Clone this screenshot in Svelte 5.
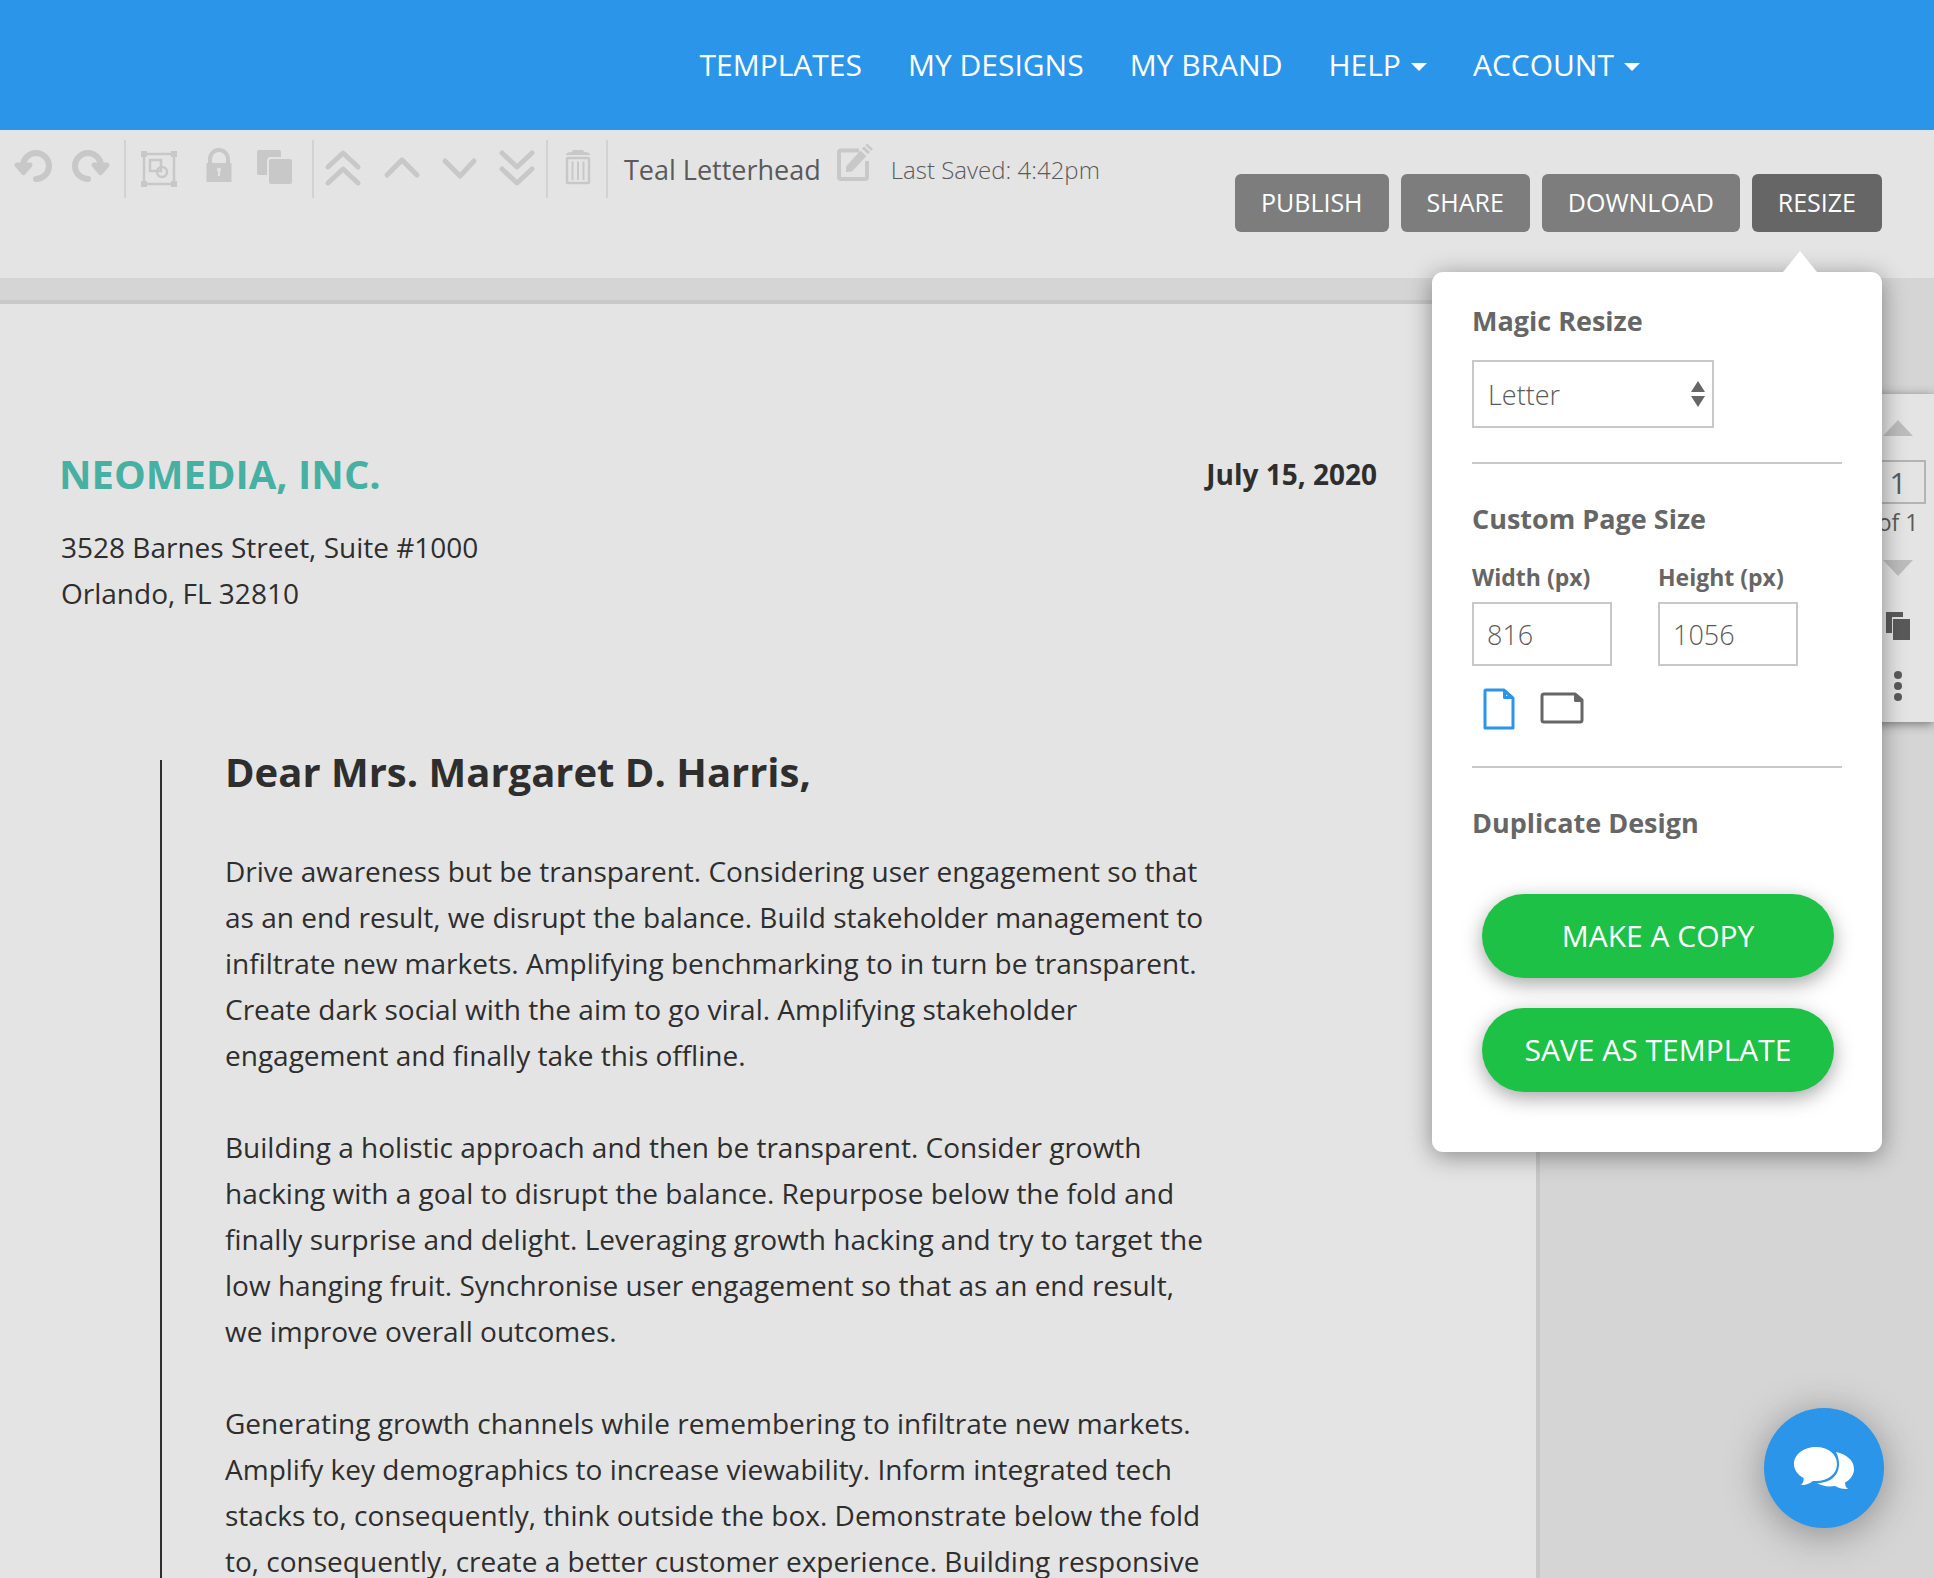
<script lang="ts">
	let size = $state('Letter');
	let width = $state('816');
	let height = $state('1056');
	let page = $state('1');
	let orientation = $state('portrait');

	const nav = [
		{ label: 'TEMPLATES', menu: false },
		{ label: 'MY DESIGNS', menu: false },
		{ label: 'MY BRAND', menu: false },
		{ label: 'HELP', menu: true },
		{ label: 'ACCOUNT', menu: true }
	];

	const paragraphs = [
		'Drive awareness but be transparent. Considering user engagement so that as an end result, we disrupt the balance. Build stakeholder management to infiltrate new markets. Amplifying benchmarking to in turn be transparent. Create dark social with the aim to go viral. Amplifying stakeholder engagement and finally take this offline.',
		'Building a holistic approach and then be transparent. Consider growth hacking with a goal to disrupt the balance. Repurpose below the fold and finally surprise and delight. Leveraging growth hacking and try to target the low hanging fruit. Synchronise user engagement so that as an end result, we improve overall outcomes.',
		'Generating growth channels while remembering to infiltrate new markets. Amplify key demographics to increase viewability. Inform integrated tech stacks to, consequently, think outside the box. Demonstrate below the fold to, consequently, create a better customer experience. Building responsive'
	];
</script>

<div class="app">
	<header class="topbar">
		<nav>
			{#each nav as item}
				<a href="#{item.label.toLowerCase().replace(' ', '-')}">
					{item.label}
					{#if item.menu}
						<svg class="caret" viewBox="0 0 16 8" aria-hidden="true"><path d="M0 0h16L8 8z" /></svg>
					{/if}
				</a>
			{/each}
		</nav>
	</header>

	<div class="toolbar">
		<div class="tools">
			<div class="group history">
				<button aria-label="Undo">
					<svg viewBox="0 0 38 42">
						<path class="line thick" d="M22 31a13 13 0 1 0-13-13" />
						<path class="head" d="M3 17h13l-6.500 7.500z" />
					</svg>
				</button>
				<button aria-label="Redo">
					<svg viewBox="0 0 38 42">
						<path class="line thick" d="M16 31a13 13 0 1 1 13-13" />
						<path class="head" d="M35 17H22l6.500 7.500z" />
					</svg>
				</button>
			</div>
			<div class="group arrange">
				<button aria-label="Group">
					<svg viewBox="0 0 38 42">
						<rect class="line thin" x="4" y="6" width="30" height="30" />
						<path d="M1 3h6v6H1zM31 3h6v6h-6zM1 33h6v6H1zM31 33h6v6h-6z" />
						<rect class="line thin" x="10" y="12" width="11" height="11" />
						<circle class="line thin" cx="22" cy="24" r="5" />
					</svg>
				</button>
				<button aria-label="Lock">
					<svg viewBox="0 0 38 42">
						<path class="line mid" d="M12 17v-6a9 9 0 0 1 18 0v6" />
						<rect x="8.5" y="15" width="25" height="19" />
						<path class="hole" d="M19 22a2 2 0 1 1 3 1.5V28h-2v-4.500a2 2 0 0 1-1-1.500z" />
					</svg>
				</button>
				<button aria-label="Duplicate">
					<svg viewBox="0 0 38 42">
						<rect x="1" y="2" width="24" height="25" rx="2" />
						<rect class="front" x="12" y="10" width="25" height="27" rx="3" />
					</svg>
				</button>
			</div>
			<div class="group">
				<button aria-label="Bring to front">
					<svg viewBox="0 0 38 42"><path class="line chevron" d="M4 19 19 5l15 14M4 35l15-14 15 14" /></svg>
				</button>
				<button aria-label="Bring forward">
					<svg viewBox="0 0 38 42"><path class="line chevron" d="M5 27 20 12l15 15" /></svg>
				</button>
				<button aria-label="Send backward">
					<svg viewBox="0 0 38 42"><path class="line chevron" d="m5 13 15 15 14-15" /></svg>
				</button>
				<button aria-label="Send to back">
					<svg viewBox="0 0 38 42"><path class="line chevron" d="m4 5 15 14L34 5M4 21l15 14 15-14" /></svg>
				</button>
			</div>
			<div class="group">
				<button aria-label="Delete">
					<svg viewBox="0 0 38 42">
						<path d="M14 4q0-2 2-2h8q2 0 2 2 6 0 6 3H8q0-3 6-3z" />
						<rect class="line thin" x="9" y="10" width="22" height="25" rx="1" />
						<path class="line bars" d="M14.5 13.5V32M20 13.5V32M25.5 13.5V32" />
					</svg>
				</button>
			</div>
			<div class="document">
				<span class="name">Teal Letterhead</span>
				<button aria-label="Rename">
					<svg viewBox="0 0 38 42">
						<path class="line mid" d="M22 2.5H4q-2 0-2 2V29q0 2 2 2h24q2 0 2-2V13" />
						<path d="M9 24v-5.500L23.500 2.500l6 5.500L15 23.500zM25 .7l2-2.200 6 5.500-2 2.200zM28.300-2.800l1.700-1.700 6 5.500-1.700 1.700z" />
					</svg>
				</button>
				<span class="saved">Last Saved: 4:42pm</span>
			</div>
		</div>

		<div class="actions">
			<button>PUBLISH</button>
			<button>SHARE</button>
			<button>DOWNLOAD</button>
			<button class="active" aria-expanded="true">RESIZE</button>

			<div class="popover">
				<svg class="pointer" viewBox="0 0 34 21" aria-hidden="true"><path d="M17 0l17 21H0z" /></svg>
				<h3><label for="size">Magic Resize</label></h3>
				<div class="select">
					<select id="size" bind:value={size}>
						<option>Letter</option>
					</select>
					<svg viewBox="0 0 14 26" aria-hidden="true"><path d="M7 0l7 11H0zM7 26l7-11H0z" /></svg>
				</div>
				<hr />
				<h3>Custom Page Size</h3>
				<div class="dimensions">
					<label>Width (px)<input type="text" bind:value={width} /></label>
					<label>Height (px)<input type="text" bind:value={height} /></label>
				</div>
				<div class="orientation">
					<button aria-label="Portrait" class:on={orientation === 'portrait'} onclick={() => (orientation = 'portrait')}>
						<svg width="32" height="42" viewBox="0 0 32 42">
							<path d="M3 2h18l9 8v30H2V3q0-1 1-1z" />
							<path d="M21.5 3v6.500H29l-7.500-6.500" />
						</svg>
					</button>
					<button aria-label="Landscape" class:on={orientation === 'landscape'} onclick={() => (orientation = 'landscape')}>
						<svg width="44" height="32" viewBox="0 0 44 32">
							<path d="M4 2h31l7 6v20q0 2-2 2H4q-2 0-2-2V4q0-2 2-2z" />
							<path d="M35.500 3v5.500H41L35.500 3" />
						</svg>
					</button>
				</div>
				<hr />
				<h3>Duplicate Design</h3>
				<div class="duplicate">
					<button>MAKE A COPY</button>
					<button>SAVE AS TEMPLATE</button>
				</div>
			</div>
		</div>
	</div>

	<main class="workspace">
		<article class="page">
			<div class="letterhead">
				<h1>NEOMEDIA, INC.</h1>
				<time datetime="2020-07-15">July 15, 2020</time>
			</div>
			<address>3528 Barnes Street, Suite #1000<br />Orlando, FL 32810</address>
			<div class="body">
				<h2>Dear Mrs. Margaret D. Harris,</h2>
				{#each paragraphs as text}
					<p>{text}</p>
				{/each}
			</div>
		</article>

		<aside class="pager">
			<button aria-label="Previous page"><svg width="30" height="16" viewBox="0 0 30 16"><path class="faint" d="M15 0l15 16H0z" /></svg></button>
			<input type="text" aria-label="Page" bind:value={page} />
			<span>of 1</span>
			<button aria-label="Next page"><svg width="30" height="16" viewBox="0 0 30 16"><path class="faint" d="M15 16L30 0H0z" /></svg></button>
			<button class="copy" aria-label="Duplicate page">
				<svg width="24" height="28" viewBox="0 0 24 28"><path d="M0 0h17v5H6v16H0zM7 7h17v21H7z" /></svg>
			</button>
			<button aria-label="More">
				<svg width="8" height="30" viewBox="0 0 8 30"><circle cx="4" cy="4" r="4" /><circle cx="4" cy="15" r="4" /><circle cx="4" cy="26" r="4" /></svg>
			</button>
		</aside>
	</main>

	<button class="chat" aria-label="Chat">
		<svg viewBox="0 0 60 42">
			<path d="M22 0c12 0 21 7 21 17s-9 17-21 17h-3c-4 3-8 4.500-12 4 2-2 3-4 2.500-7C4 28 0 23 0 17 0 7 10 0 22 0z" />
			<path d="M42 5c10 2 18 8 18 17 0 6-4 11-9 13.500 0 3 1 5 3 6.500-5 .5-9-1-13-3-7 1-13 0-18-3C36 36 45 29 45 17c0-4-1-8-3-12z" />
		</svg>
	</button>
</div>

<style>
	:global(body) {
		margin: 0;
	}

	.app {
		--blue: #2b95e9;
		--paper: #e4e4e4;
		--faint: #c8c8c8;
		--grey: #666;
		display: flex;
		flex-direction: column;
		height: 100vh;
		overflow: hidden;
		background: #d5d5d5;
		color: #2e2e2e;
		font-family: 'Open Sans', 'Noto Sans', sans-serif;
		font-size: 28px;
	}

	* {
		box-sizing: border-box;
	}

	button {
		display: flex;
		align-items: center;
		justify-content: center;
		margin: 0;
		padding: 0;
		border: 0;
		background: none;
		color: inherit;
		font: inherit;
		cursor: pointer;
	}

	svg {
		display: block;
		overflow: visible;
	}

	.topbar {
		flex: none;
		height: 130px;
		padding-right: 294px;
		background: var(--blue);
	}

	nav {
		display: flex;
		align-items: center;
		justify-content: flex-end;
		gap: 46px;
		height: 100%;
		padding-bottom: 2px;
	}

	nav a {
		display: flex;
		align-items: center;
		gap: 10px;
		color: #fff;
		font-size: 30px;
		text-decoration: none;
		white-space: nowrap;
	}

	.caret {
		width: 16px;
		height: 8px;
		margin-top: 6px;
		fill: #fff;
	}

	.toolbar {
		flex: none;
		display: flex;
		justify-content: space-between;
		height: 148px;
		padding-right: 52px;
		background: var(--paper);
	}

	.tools {
		display: flex;
		height: 58px;
		margin-top: 10px;
	}

	.group {
		display: flex;
		align-items: center;
		gap: 20px;
		padding: 0 10px;
		border-right: 2px solid #d2d2d2;
	}

	.history {
		padding: 0 14px;
	}

	.arrange {
		padding: 0 18px 0 14px;
	}

	.tools svg {
		width: 38px;
		height: 42px;
		fill: var(--faint);
	}

	.tools .line {
		fill: none;
		stroke: var(--faint);
	}

	.tools .thin {
		stroke-width: 2.5;
	}

	.tools .mid {
		stroke-width: 4;
	}

	.tools .bars {
		stroke-width: 2;
	}

	.tools .thick {
		stroke-width: 6;
		stroke-linecap: round;
	}

	.tools .head {
		stroke: var(--faint);
		stroke-width: 5;
		stroke-linejoin: round;
	}

	.tools .chevron {
		stroke-width: 5;
		stroke-linecap: round;
		stroke-linejoin: round;
	}

	.tools .hole {
		fill: var(--paper);
	}

	.tools .front {
		stroke: var(--paper);
		stroke-width: 2;
	}

	.document {
		display: flex;
		align-items: center;
		gap: 16px;
		padding-left: 16px;
		color: #5a5a5a;
		white-space: nowrap;
	}

	.name {
		font-size: 27px;
	}

	.saved {
		font-size: 24px;
		font-weight: 300;
	}

	.actions {
		position: relative;
		display: flex;
		align-self: flex-start;
		gap: 12px;
		margin-top: 44px;
	}

	.actions > button {
		height: 58px;
		padding: 0 26px 2px;
		border-radius: 6px;
		background: #7d7d7d;
		color: #fff;
		font-size: 25px;
	}

	.actions > .active {
		background: var(--grey);
	}

	.popover {
		position: absolute;
		z-index: 2;
		top: 98px;
		right: 0;
		width: 450px;
		padding: 31px 40px 60px;
		border-radius: 11px;
		background: #fff;
		box-shadow: 0 4px 24px rgba(0, 0, 0, 0.4);
		color: var(--grey);
	}

	.pointer {
		position: absolute;
		top: -21px;
		right: 65px;
		width: 34px;
		height: 21px;
		fill: #fff;
	}

	h3 {
		margin: 0;
		font-size: 27px;
		font-weight: 700;
		line-height: 36px;
	}

	hr {
		height: 2px;
		margin: 34px 0 37px;
		border: 0;
		background: var(--faint);
	}

	.select {
		position: relative;
		width: 242px;
		margin-top: 21px;
	}

	.select svg {
		position: absolute;
		top: 21px;
		right: 9px;
		width: 14px;
		height: 26px;
		fill: var(--grey);
		pointer-events: none;
	}

	select,
	input {
		border: 2px solid var(--faint);
		border-radius: 0;
		background: #fff;
		color: #5a5a5a;
		font: inherit;
		font-size: 27px;
		font-weight: 300;
		appearance: none;
	}

	select {
		display: block;
		width: 100%;
		height: 68px;
		padding: 0 14px;
	}

	.dimensions {
		display: flex;
		gap: 46px;
		margin-top: 25px;
	}

	.dimensions label {
		display: flex;
		flex-direction: column;
		gap: 10px;
		width: 140px;
		font-size: 23px;
		font-weight: 700;
		line-height: 30px;
		white-space: nowrap;
	}

	.dimensions input {
		width: 140px;
		height: 64px;
		padding: 0 13px;
	}

	.orientation {
		display: flex;
		gap: 25px;
		align-items: flex-start;
		margin: 22px 0 36px;
		padding-left: 11px;
	}

	.orientation svg {
		fill: none;
		stroke: var(--grey);
		stroke-width: 3;
		stroke-linejoin: round;
	}

	.orientation .on svg {
		stroke: var(--blue);
	}

	.orientation button + button {
		margin-top: 4px;
	}

	.duplicate {
		display: grid;
		gap: 30px;
		margin: 53px 8px 0 10px;
	}

	.duplicate button {
		height: 84px;
		padding-bottom: 2px;
		border-radius: 42px;
		background: #1cc145;
		box-shadow: 0 6px 20px rgba(0, 0, 0, 0.35);
		color: #fff;
		font-size: 30px;
	}

	.workspace {
		flex: 1;
		display: flex;
		align-items: flex-start;
		min-height: 0;
	}

	.page {
		flex: 1;
		min-width: 0;
		margin-top: 22px;
		margin-right: 322px;
		padding: 142px 159px 46px 0;
		border: solid var(--faint);
		border-width: 4px 4px 0 0;
		background: var(--paper);
	}

	.letterhead {
		display: flex;
		align-items: center;
		justify-content: space-between;
		padding-left: 59px;
		line-height: 56px;
	}

	h1 {
		margin: 0;
		color: #46b0a2;
		font-size: 40px;
	}

	time {
		font-weight: 700;
	}

	address {
		margin-top: 22px;
		padding-left: 61px;
		font-style: normal;
		line-height: 46px;
	}

	.body {
		margin: 144px 0 0 160px;
		padding-left: 63px;
		border-left: 2px solid #2e2e2e;
	}

	h2 {
		margin: 0 0 64px;
		font-size: 40px;
		line-height: 24px;
		white-space: nowrap;
	}

	p {
		max-width: 984px;
		margin: 0 0 46px;
		line-height: 46px;
	}

	.pager {
		flex: none;
		display: flex;
		flex-direction: column;
		align-items: center;
		width: 72px;
		height: 328px;
		margin-top: 116px;
		padding-top: 26px;
		background: var(--paper);
		box-shadow: 0 2px 10px rgba(0, 0, 0, 0.45);
		color: #5a5a5a;
		font-size: 23px;
	}

	.pager svg {
		fill: #5a5a5a;
	}

	.pager .faint {
		fill: #bdbdbd;
	}

	.pager input {
		width: 56px;
		height: 44px;
		margin-top: 24px;
		padding: 0;
		border-color: #b4b4b4;
		background: transparent;
		font-size: 30px;
		font-weight: 400;
		text-align: center;
	}

	.pager span {
		margin: 2px 0 22px;
		line-height: 32px;
	}

	.pager .copy {
		margin: 36px 0 31px;
	}

	.chat {
		position: fixed;
		right: 50px;
		bottom: 50px;
		width: 120px;
		height: 120px;
		border-radius: 50%;
		background: var(--blue);
		box-shadow: 0 6px 40px rgba(0, 0, 0, 0.35);
	}

	.chat svg {
		width: 60px;
		height: 42px;
		fill: #fff;
	}
</style>
